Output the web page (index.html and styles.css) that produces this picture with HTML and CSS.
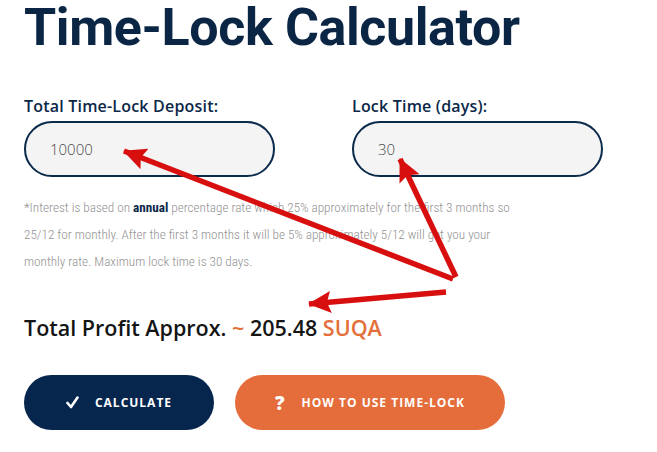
FILE: index.html
```html
<!DOCTYPE html>
<html lang="en">

<head>
    <meta charset="UTF-8">
    <meta name="viewport" content="width=device-width, initial-scale=1.0">
    <title>Time-Lock Calculator</title>
    <link rel="stylesheet" href="styles.css">
</head>

<body>
    <div class="calculator">
        <h1 class="title">Time-Lock Calculator</h1>

        <div class="fields">
            <div class="field">
                <label for="deposit">Total Time-Lock Deposit:</label>
                <input id="deposit" type="text" value="10000">
            </div>
            <div class="field">
                <label for="days">Lock Time (days):</label>
                <input id="days" type="text" value="30">
            </div>
        </div>

        <p class="note">*Interest is based on <strong>annual</strong> percentage rate which 25% approximately for the first 3 months so 25/12 for monthly. After the first 3 months it will be 5% approximately 5/12 will get you your monthly rate. Maximum lock time is 30 days.</p>

        <p class="profit">Total Profit Approx. <span class="accent">~</span> 205.48 <span class="accent">SUQA</span></p>

        <div class="actions">
            <button class="btn btn-calc">
                <svg class="btn-icon" width="13" height="13" viewBox="0 0 13 13">
                    <path d="M1.5 7 L5 11 L11.5 1.5" fill="none" stroke="#fff" stroke-width="2.6" stroke-linecap="round" stroke-linejoin="round" />
                </svg>
                Calculate
            </button>
            <button class="btn btn-help"><span class="btn-q">?</span> How to use Time-Lock</button>
        </div>
    </div>

    <!-- red annotation arrows drawn over the screenshot -->
    <svg class="arrows" width="657" height="452" viewBox="0 0 657 452">
        <defs>
            <marker id="head" markerUnits="userSpaceOnUse" markerWidth="24" markerHeight="22" refX="22" refY="11" orient="auto">
                <path d="M0 0 L23 11 L0 22 L4 11 z" fill="#d80f0f" />
            </marker>
        </defs>
        <line x1="453" y1="279" x2="124" y2="151" stroke="#d80f0f" stroke-width="5.5" marker-end="url(#head)" />
        <line x1="456" y1="277" x2="400" y2="159" stroke="#d80f0f" stroke-width="5.5" marker-end="url(#head)" />
        <line x1="446" y1="292" x2="309" y2="304" stroke="#d80f0f" stroke-width="5.5" marker-end="url(#head)" />
    </svg>
</body>

</html>
```
FILE: styles.css
```css
/* time-lock calculator page */

body {
    margin: 0;
    background: #fff;
    font-family: "Open Sans", "Noto Sans", sans-serif;
    color: #0b2748;
}

.calculator {
    padding: 0 24px;
}

.title {
    margin: 0;
    font-family: "Roboto", sans-serif;
    font-weight: 700;
    font-size: 52px;
    line-height: 56px;
    letter-spacing: -0.4px;
    color: #0b2545;
}

/* inputs */

.fields {
    display: grid;
    grid-template-columns: 251px 251px;
    column-gap: 77px;
    margin-top: 39px;
}

.field {
    display: flex;
    flex-direction: column;
    gap: 4px;
}

.field label {
    font-weight: 600;
    font-size: 16px;
    line-height: 22px;
    letter-spacing: 0.2px;
    color: #0b2748;
}

.field input {
    box-sizing: border-box;
    width: 100%;
    height: 56px;
    padding: 0 24px;
    border: 2px solid #0b2a4c;
    border-radius: 30px;
    background: #f4f4f4;
    font-family: "Open Sans", sans-serif;
    font-weight: 300;
    font-size: 15px;
    color: #4a4a4a;
    outline: none;
}

/* notes and results */

.note {
    margin: 17px 0 0;
    max-width: 500px;
    font-family: "Roboto", sans-serif;
    font-weight: 300;
    font-size: 13.2px;
    font-stretch: 75%;
    line-height: 27px;
    color: #929292;
}

.note strong {
    font-weight: 700;
    color: #0b2748;
}

.profit {
    margin: 39px 0 0;
    font-weight: 600;
    font-size: 21.5px;
    line-height: 28px;
    color: #151515;
}

.accent {
    color: #e3703a;
}

/* buttons */

.actions {
    display: flex;
    gap: 21px;
    margin-top: 33px;
}

.btn {
    display: flex;
    align-items: center;
    justify-content: center;
    gap: 16px;
    height: 55px;
    border: none;
    border-radius: 28px;
    font-family: "Open Sans", sans-serif;
    font-weight: 700;
    font-size: 12px;
    letter-spacing: 1px;
    text-transform: uppercase;
    color: #fff;
    cursor: pointer;
}

.btn-calc {
    width: 190px;
    background: #06264d;
}

.btn-help {
    width: 270px;
    background: #e46d3b;
}

.btn-q {
    font-size: 19px;
    font-weight: 800;
}

.arrows {
    position: absolute;
    top: 0;
    left: 0;
    pointer-events: none;
}
```
